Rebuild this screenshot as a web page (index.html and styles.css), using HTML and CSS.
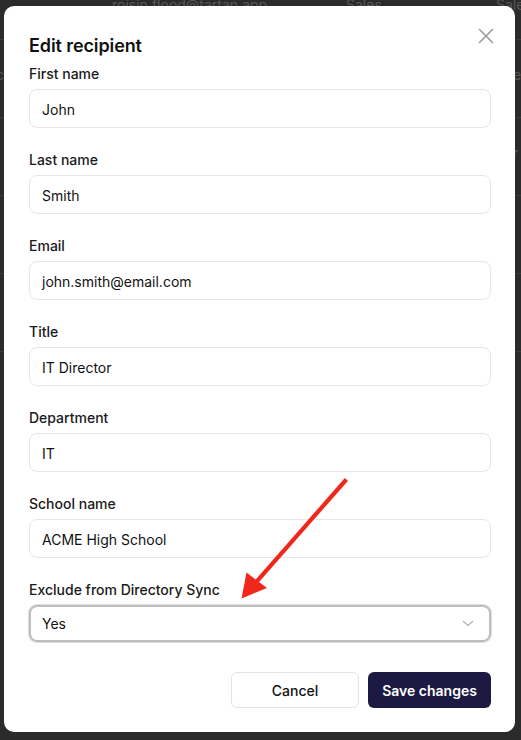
FILE: index.html
```html
<!DOCTYPE html>
<html lang="en">
<head>
<meta charset="utf-8">
<title>Edit recipient</title>
<link rel="stylesheet" href="styles.css">
</head>
<body>
<div class="backdrop">
  <div class="bg-row bg-row-first">
    <span class="bg-cell bg-email">roisin.flood@tartan.app</span>
    <span class="bg-cell bg-dept">Sales</span>
    <span class="bg-cell bg-team">Sales</span>
  </div>
  <div class="bg-row">
    <span class="bg-cell bg-edge-l">c</span>
    <span class="bg-cell bg-edge-r">e</span>
  </div>
  <div class="bg-row">
    <span class="bg-cell bg-edge-l">&nbsp;</span>
    <span class="bg-cell bg-edge-r">r</span>
  </div>
  <div class="bg-row"></div>
  <div class="bg-row"></div>
</div>

<div class="modal" role="dialog" aria-labelledby="dlg-title">
  <button class="close" aria-label="Close">
    <svg width="16" height="16" viewBox="0 0 16 16"><path d="M1.5 1.5 L14.5 14.5 M14.5 1.5 L1.5 14.5" stroke="#9a9a9a" stroke-width="1.6" fill="none" stroke-linecap="round"/></svg>
  </button>
  <h2 id="dlg-title" class="title">Edit recipient</h2>

  <div class="field">
    <label class="label">First name</label>
    <div class="input">John</div>
  </div>
  <div class="field">
    <label class="label">Last name</label>
    <div class="input">Smith</div>
  </div>
  <div class="field">
    <label class="label">Email</label>
    <div class="input">john.smith@email.com</div>
  </div>
  <div class="field">
    <label class="label">Title</label>
    <div class="input">IT Director</div>
  </div>
  <div class="field">
    <label class="label">Department</label>
    <div class="input">IT</div>
  </div>
  <div class="field">
    <label class="label">School name</label>
    <div class="input">ACME High School</div>
  </div>
  <div class="field">
    <label class="label">Exclude from Directory Sync</label>
    <div class="input select">
      <span>Yes</span>
      <svg class="chev" width="12" height="7" viewBox="0 0 12 7"><path d="M1 1 L6 5.5 L11 1" stroke="#b0b0b0" stroke-width="1.2" fill="none"/></svg>
    </div>
  </div>

  <div class="actions">
    <button class="btn btn-cancel">Cancel</button>
    <button class="btn btn-save">Save changes</button>
  </div>
</div>

<svg class="arrow" width="521" height="740" viewBox="0 0 521 740" aria-hidden="true">
  <line x1="345" y1="481" x2="258" y2="580" stroke="#f0281c" stroke-width="4.2" stroke-linecap="square"/>
  <polygon points="241.5,598.5 246.5,572.5 267,588" fill="#f0281c"/>
</svg>
</body>
</html>
```
FILE: styles.css
```css
* { box-sizing: border-box; }
html, body {
  margin: 0;
  padding: 0;
  width: 521px;
  height: 740px;
  overflow: hidden;
  background: #2b2b2b;
  font-family: Inter, "Liberation Sans", sans-serif;
  color: #111;
}
.backdrop {
  display: flex;
  flex-direction: column;
  margin-top: -8px;
}
.bg-row {
  position: relative;
  height: 78px;
  border-bottom: 1px solid #3a3a3a;
  font-size: 14px;
  color: #585858;
}
.bg-row-first { height: 48px; }
.bg-cell { position: absolute; top: 4px; }
.bg-row + .bg-row .bg-cell { top: 26px; }
.bg-email { left: 112px; }
.bg-dept { left: 346px; }
.bg-team { left: 496px; }
.bg-edge-l { left: -4px; }
.bg-edge-r { left: 513px; }

.modal {
  position: absolute;
  left: 4px;
  top: 6px;
  width: 511px;
  height: 726px;
  background: #fff;
  border-radius: 10px;
  padding: 28px 24px 24px 25px;
  display: flex;
  flex-direction: column;
}
.close {
  position: absolute;
  top: 21px;
  right: 20px;
  width: 18px;
  height: 18px;
  padding: 1px;
  border: 0;
  background: none;
  display: flex;
}
.title {
  margin: 0 0 6px;
  font-size: 18px;
  line-height: 24px;
  font-weight: 600;
  color: #111;
  letter-spacing: -0.1px;
}
.field {
  display: flex;
  flex-direction: column;
  margin-bottom: 22px;
}
.label {
  font-size: 14px;
  line-height: 20px;
  font-weight: 500;
  color: #1a1a1a;
}
.input {
  margin-top: 5px;
  height: 39px;
  border: 1px solid #e6e6e6;
  border-radius: 8px;
  padding: 2px 12px 0;
  display: flex;
  align-items: center;
  font-size: 14px;
  color: #111;
}
.select {
  height: 37px;
  border: 2px solid #bdbdbd;
  box-shadow: 0 0 0 1px #dcdcdc;
  justify-content: space-between;
  padding: 0 15px 1px 11px;
}
.chev { margin-top: 1px; }
.actions {
  margin-top: 8px;
  display: flex;
  justify-content: flex-end;
  gap: 9px;
}
.btn {
  height: 36px;
  border-radius: 6px;
  font-family: inherit;
  font-size: 14px;
  font-weight: 500;
  cursor: pointer;
}
.btn-cancel {
  width: 128px;
  background: #fff;
  border: 1px solid #e4e4e4;
  color: #111;
}
.btn-save {
  width: 123px;
  background: #1c1942;
  border: 0;
  color: #fff;
  font-weight: 600;
}
.arrow {
  position: absolute;
  left: 0;
  top: 0;
  pointer-events: none;
}
```
